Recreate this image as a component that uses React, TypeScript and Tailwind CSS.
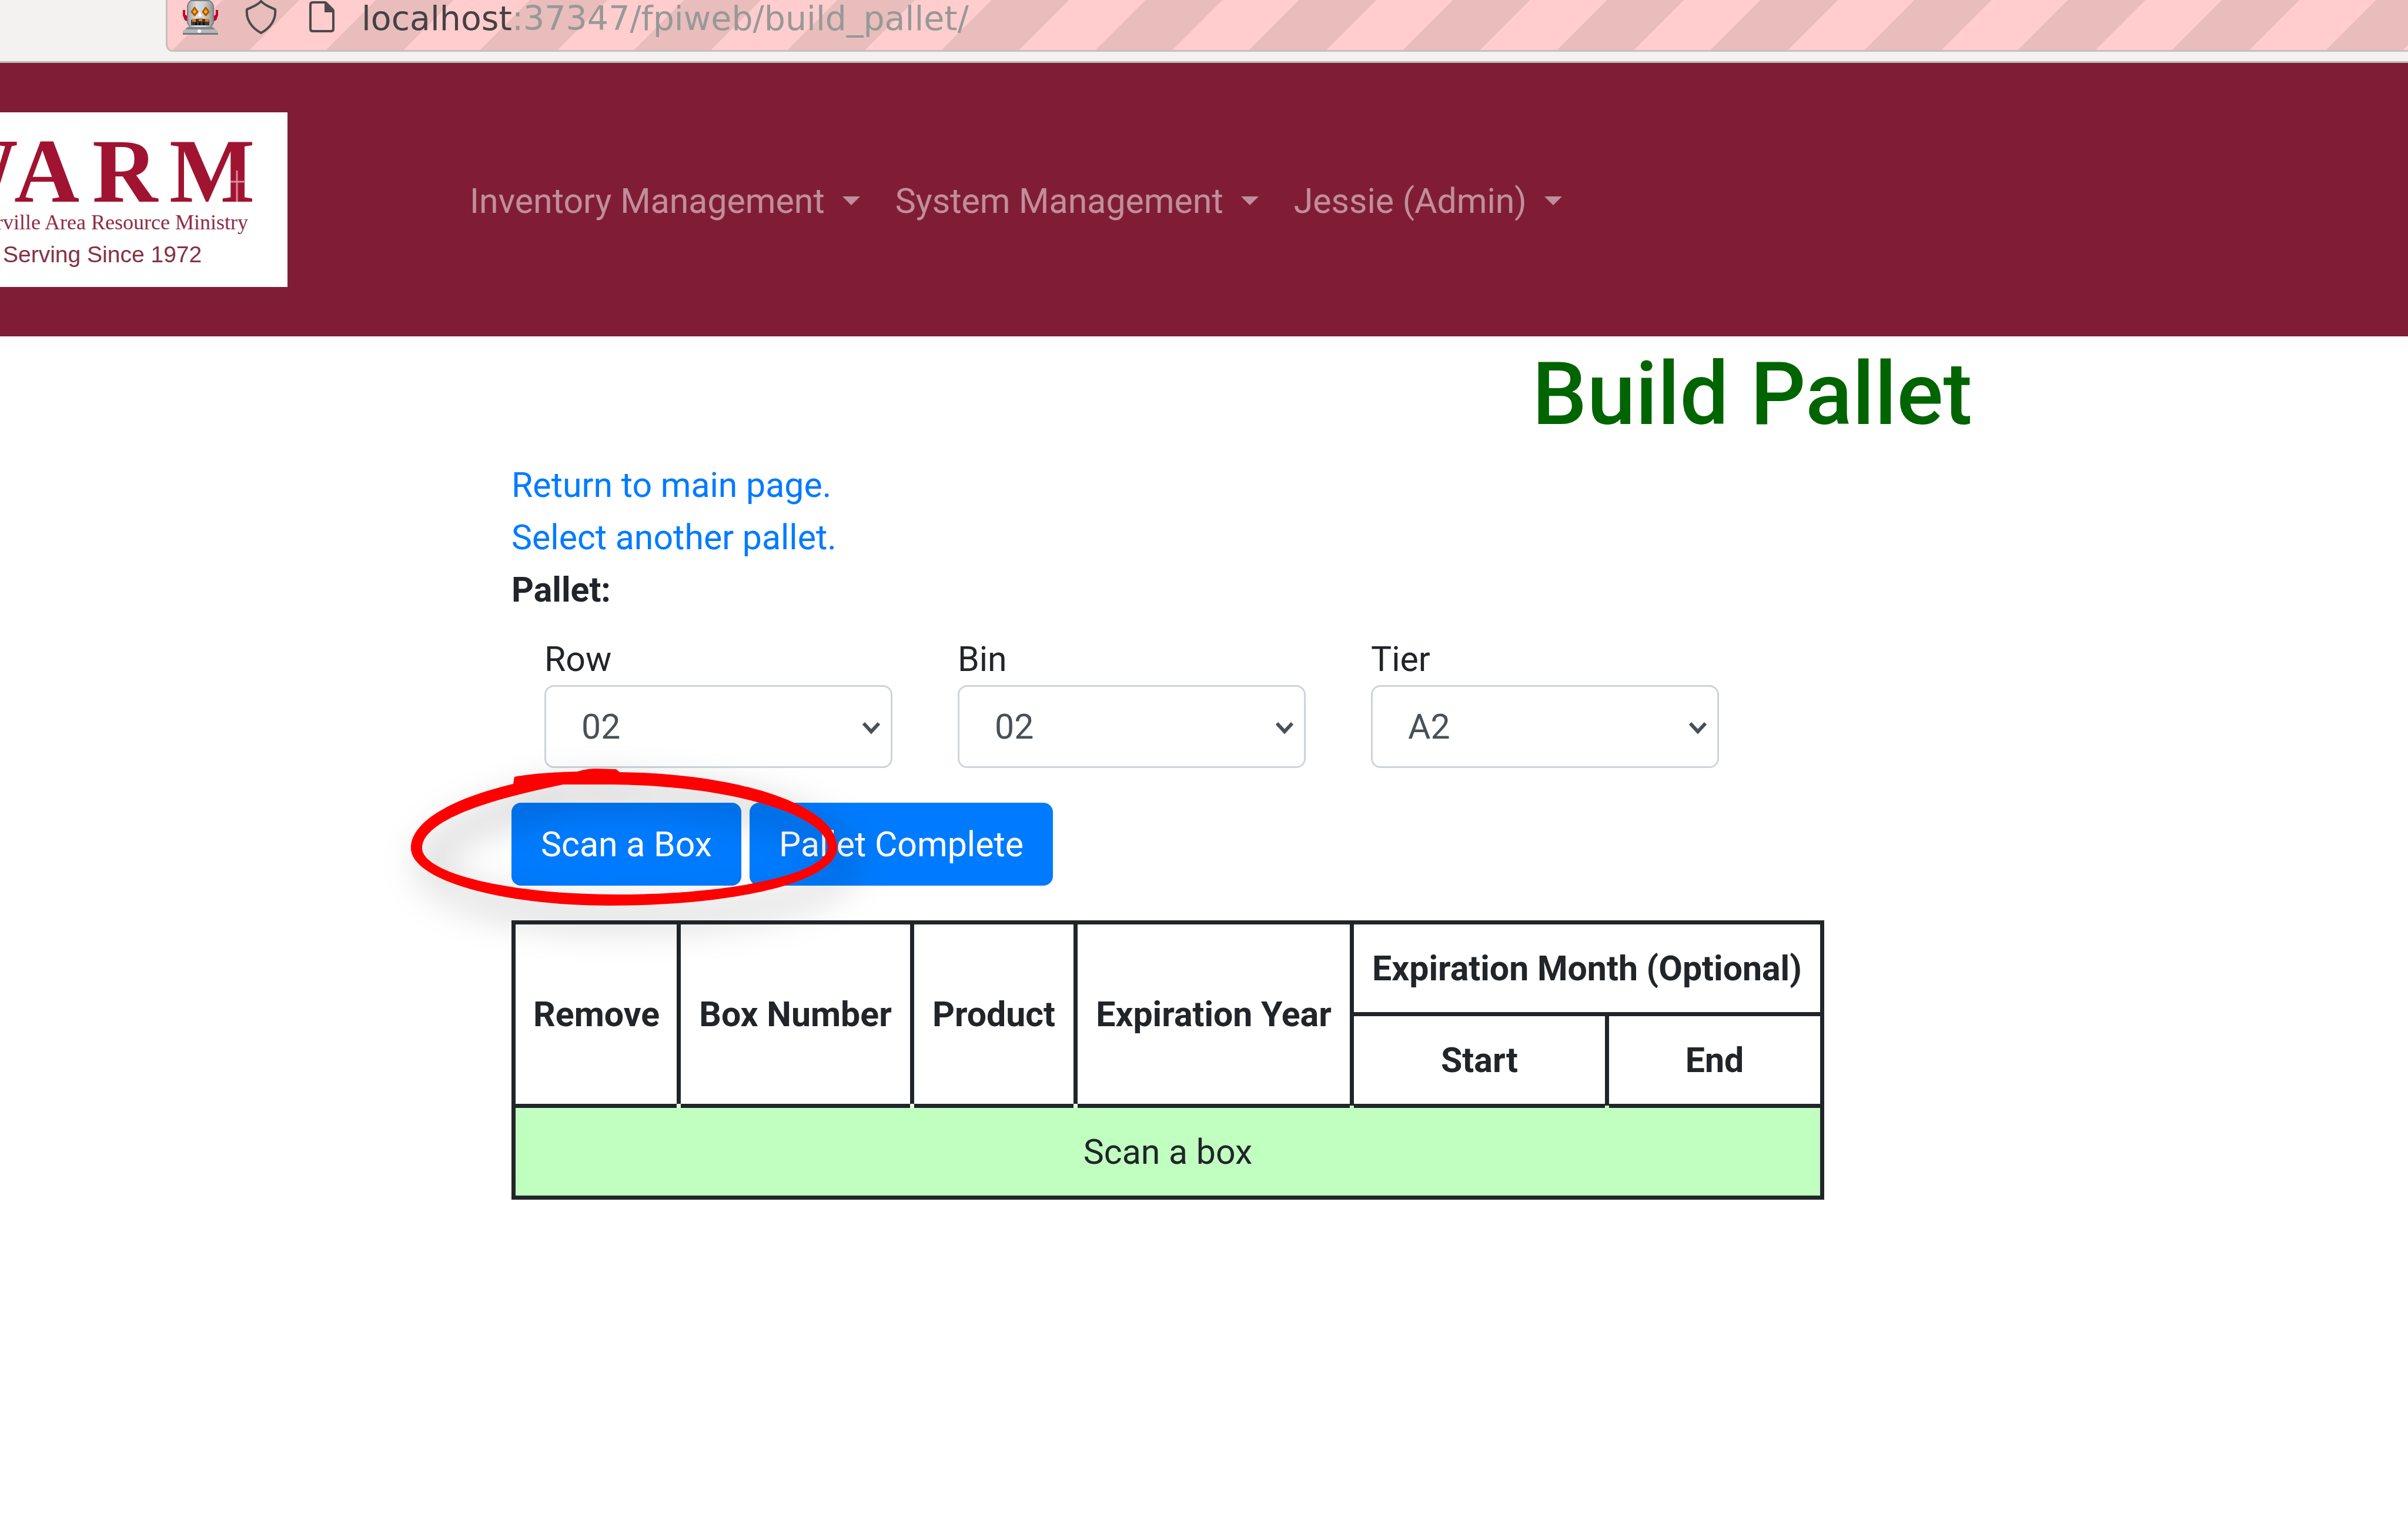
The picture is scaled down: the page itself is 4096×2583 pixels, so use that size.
import React from "react";

function RobotIcon() {
  return (
    <svg viewBox="0 0 60 60" className="h-[60px] w-[60px]" aria-hidden="true">
      <defs>
        <linearGradient id="robotHead" x1="0" x2="1" y1="0" y2="0">
          <stop offset="0" stopColor="#a3a5a8" />
          <stop offset="0.35" stopColor="#dcdee0" />
          <stop offset="0.65" stopColor="#cdcfd1" />
          <stop offset="1" stopColor="#8e9093" />
        </linearGradient>
      </defs>
      <path d="M0 17h4v8l5 3v9l-6-3-3-8z" fill="#c4002b" />
      <path d="M60 17h-4v8l-5 3v9l6-3 3-8z" fill="#c4002b" />
      <path d="M14 1h31q7 4 7 11v27l-5 8H13l-5-8V12q0-7 6-11z" fill="url(#robotHead)" stroke="#7d7f82" strokeWidth="2" />
      <path d="M20 13l5 7-5 6-5-6z" fill="#ffb400" stroke="#b0560c" strokeWidth="3" strokeLinejoin="round" />
      <path d="M39 13l5 7-5 6-5-6z" fill="#ffb400" stroke="#b0560c" strokeWidth="3" strokeLinejoin="round" />
      <path d="M29 19l3 9h-6z" fill="#fff" />
      <path d="M14 34q15-5 31 0v9H14z" fill="#3a3a3a" />
      <path d="M16 32h6v5h-6zM27 31h6v5h-6zM38 32h6v5h-6z" fill="#ee7a10" />
      <path d="M21 38h3v5h-3zM27 38h3v5h-3zM34 38h3v5h-3z" fill="#111" />
      <path d="M8 47h43l8 5v6H0v-6z" fill="#b5b7ba" />
      <path d="M8 46h43l4 4H4z" fill="#838588" />
      <path d="M0 56h60v3H0z" fill="#77797c" />
      <circle cx="28" cy="53" r="3" fill="#fff" />
    </svg>
  );
}

function ShieldIcon() {
  return (
    <svg viewBox="0 0 60 60" className="h-[60px] w-[60px]" fill="none" stroke="#4c4a4a" strokeWidth="4" strokeLinejoin="round" aria-hidden="true">
      <path d="M29 2C23 9 14 12 5 16C3 34 14 48 29 56C44 48 55 34 53 16C44 12 35 9 29 2z" />
    </svg>
  );
}

function PageIcon() {
  return (
    <svg viewBox="0 0 60 60" className="h-[60px] w-[60px]" fill="none" stroke="#4c4a4a" strokeWidth="4" strokeLinejoin="round" aria-hidden="true">
      <path d="M13 4h21l14 14v31q0 4-4 4H13q-4 0-4-4V8q0-4 4-4z" />
      <path d="M34 4v16h14v-4L36 4z" fill="#4c4a4a" strokeWidth="2" />
    </svg>
  );
}

function WarmLogo() {
  return (
    <svg viewBox="0 0 489 297" className="h-[297px] w-[489px] shrink-0 bg-white" role="img" aria-label="WARM, Westerville Area Resource Ministry, Serving Since 1972">
      <g fill="#a01431" fontFamily="Liberation Serif, serif" fontWeight="700" fontSize="154">
        <text x="-123" y="152">W</text>
        <text x="24" y="152">A</text>
        <text x="157" y="152">R</text>
        <text x="288" y="152">M</text>
      </g>
      <path d="M403 99v53M392 118h25" stroke="#e08a96" strokeWidth="3" />
      <text x="422" y="199" textAnchor="end" fill="#8f2c45" fontFamily="Liberation Serif, serif" fontSize="36">
        Westerville Area Resource Ministry
      </text>
      <text x="5" y="255" fill="#853246" fontFamily="Liberation Sans, sans-serif" fontSize="39">
        Serving Since 1972
      </text>
    </svg>
  );
}

function BrowserBar() {
  return (
    <div className="flex h-[107px] items-start border-b-[3px] border-[#bdbbb9] bg-[#f3f2f0] pl-[282px]">
      <div className="flex h-[88px] flex-1 items-start gap-9 rounded-bl-xl border-b-[3px] border-l-[3px] border-[#c4c0bd] bg-[repeating-linear-gradient(135deg,#ffcdcd_0px,#ffcdcd_66px,#e9bdbc_66px,#e9bdbc_159px,#ffcdcd_159px,#ffcdcd_185px)] pl-[26px]">
        <div className="flex gap-11">
          <RobotIcon />
          <ShieldIcon />
          <PageIcon />
        </div>
        <p className="font-['DejaVu_Sans',sans-serif] text-[57px] leading-[62px] whitespace-nowrap text-[#979997]">
          <span className="text-[#444243]">localhost</span>:37347/fpiweb/build_pallet/
        </p>
      </div>
    </div>
  );
}

const menus = ["Inventory Management", "System Management", "Jessie (Admin)"];

function NavBar() {
  return (
    <header className="flex items-center bg-[#801d34] py-21">
      <WarmLogo />
      <nav className="flex gap-[60px] pt-1 pl-[310px]">
        {menus.map((label) => (
          <button key={label} type="button" className="flex items-center gap-[30px] leading-[89px] whitespace-nowrap text-white/50">
            {label}
            <span className="border-x-[15px] border-t-[15px] border-x-transparent border-t-white/50" />
          </button>
        ))}
      </nav>
    </header>
  );
}

function LocationSelect({ id, label, value }: { id: string; label: string; value: string }) {
  return (
    <div className="flex w-[592px] flex-col">
      <label htmlFor={id}>{label}</label>
      <div className="relative">
        <select
          id={id}
          defaultValue={value}
          className="h-[141px] w-full appearance-none rounded-2xl border-[3px] border-[#ced4da] bg-white pl-15 text-[#495057]"
        >
          <option>{value}</option>
        </select>
        <svg viewBox="0 0 32 22" className="pointer-events-none absolute top-[62px] right-5 h-[22px] w-[32px]" fill="none" stroke="#495057" strokeWidth="6" aria-hidden="true">
          <path d="M3 3l13 14l13-14" />
        </svg>
      </div>
    </div>
  );
}

function HighlightRing() {
  return (
    <svg
      viewBox="600 1200 950 520"
      className="pointer-events-none absolute -top-[165px] -left-[270px] z-10 h-[520px] w-[950px] overflow-visible"
      aria-hidden="true"
    >
      <defs>
        <filter id="ringShadow" x="-30%" y="-80%" width="160%" height="260%">
          <feDropShadow dx="22" dy="28" stdDeviation="32" floodColor="#000" floodOpacity="0.34" />
        </filter>
      </defs>
      <path
        filter="url(#ringShadow)"
        fill="#fe0000"
        fillRule="evenodd"
        d="M873 1333L875 1321C900 1316 940 1313 982 1312C995 1308 1005 1307 1014 1307L1048 1308L1054 1313C1258 1315 1424 1370 1424 1441C1424 1500 1250 1540 1038 1540C851 1540 699 1496 699 1442C699 1400 760 1360 873 1333zM958 1334C790 1368 718 1405 718 1442C718 1485 867 1521 1050 1521C1248 1521 1408 1485 1408 1441C1408 1385 1239 1334 1030 1334z"
      />
    </svg>
  );
}

const th = "relative border-[7px] border-[#212529] p-[30px] font-bold whitespace-nowrap";
const fullNotch =
  "after:absolute after:-right-[7px] after:-bottom-[7px] after:h-[7px] after:w-[7px] after:bg-[#e8ffe8] after:content-['']";
const halfNotch =
  "after:absolute after:-right-[7px] after:-bottom-[7px] after:h-1 after:w-[7px] after:bg-[#c1ffc1] after:content-['']";

function BoxTable() {
  return (
    <table className="mt-[59px] w-[2233px] table-fixed border-collapse text-center">
      <colgroup>
        <col className="w-[281px]" />
        <col className="w-[397px]" />
        <col className="w-[278px]" />
        <col className="w-[470px]" />
        <col className="w-[434px]" />
        <col />
      </colgroup>
      <thead>
        <tr>
          <th rowSpan={2} className={`${th} ${fullNotch}`}>Remove</th>
          <th rowSpan={2} className={`${th} ${fullNotch}`}>Box Number</th>
          <th rowSpan={2} className={`${th} ${fullNotch}`}>Product</th>
          <th rowSpan={2} className={`${th} ${halfNotch}`}>Expiration Year</th>
          <th colSpan={2} className={th}>Expiration Month (Optional)</th>
        </tr>
        <tr>
          <th className={`${th} ${halfNotch}`}>Start</th>
          <th className={th}>End</th>
        </tr>
      </thead>
      <tbody>
        <tr>
          <td colSpan={6} className="border-[7px] border-[#212529] bg-[#c1ffc1] p-[30px]">Scan a box</td>
        </tr>
      </tbody>
    </table>
  );
}

const blueButton = "rounded-2xl bg-[#007bff] px-[50px] py-[26px] whitespace-nowrap text-white";

export default function App() {
  return (
    <div className="min-h-screen overflow-hidden bg-white font-[Roboto,sans-serif] text-[59px] leading-[89px] text-[#212529]">
      <BrowserBar />
      <NavBar />
      <main className="pl-[870px]">
        <h1 className="pt-[10px] pb-5 pl-[1736px] text-[148px] leading-[178px] font-medium whitespace-nowrap text-[#006400]">Build Pallet</h1>
        <div className="flex flex-col items-start">
          <a href="#main" className="text-[#007bff]">Return to main page.</a>
          <a href="#pallets" className="text-[#007bff]">Select another pallet.</a>
          <strong className="font-bold">Pallet:</strong>
        </div>
        <form className="flex gap-[111px] pt-[29px] pl-14">
          <LocationSelect id="row" label="Row" value="02" />
          <LocationSelect id="bin" label="Bin" value="02" />
          <LocationSelect id="tier" label="Tier" value="A2" />
        </form>
        <div className="relative mt-[59px] flex gap-[14px]">
          <button type="button" className={blueButton}>Scan a Box</button>
          <button type="button" className={blueButton}>Pallet Complete</button>
          <HighlightRing />
        </div>
        <BoxTable />
      </main>
    </div>
  );
}
